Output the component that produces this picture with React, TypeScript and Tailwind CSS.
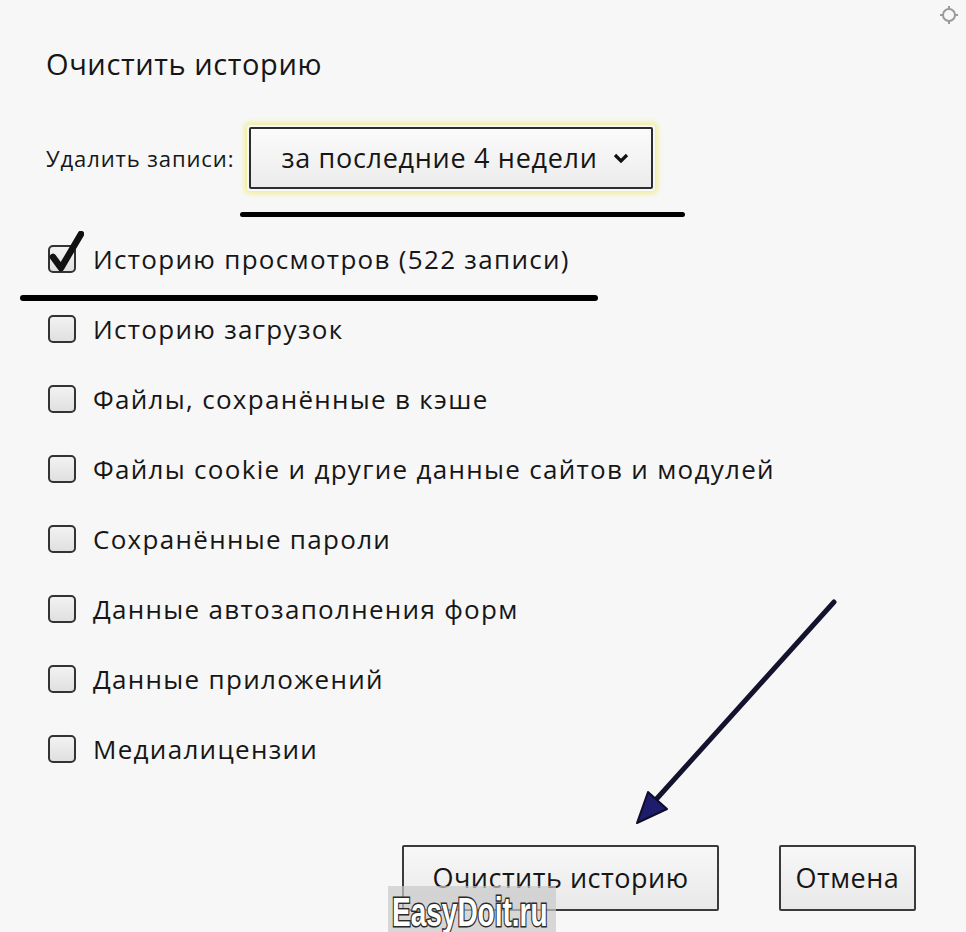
import React from 'react';

const items = [
  { label: 'Историю просмотров (522 записи)', checked: true },
  { label: 'Историю загрузок', checked: false },
  { label: 'Файлы, сохранённые в кэше', checked: false },
  { label: 'Файлы cookie и другие данные сайтов и модулей', checked: false },
  { label: 'Сохранённые пароли', checked: false },
  { label: 'Данные автозаполнения форм', checked: false },
  { label: 'Данные приложений', checked: false },
  { label: 'Медиалицензии', checked: false },
];

function CheckBox({ checked }: { checked: boolean }) {
  return (
    <div className="relative h-[28px] w-[28px] shrink-0 rounded-[5px] border-2 border-[#333] bg-gradient-to-b from-[#f2f2f2] to-[#e0e0e0]">
      {checked && (
        <svg
          className="absolute left-[-2px] top-[-16px] h-[44px] w-[36px]"
          viewBox="0 0 36 44"
        >
          <path
            d="M5 26 L13 37 L33 3"
            fill="none"
            stroke="#111"
            strokeWidth="6.5"
            strokeLinejoin="round"
            strokeLinecap="round"
          />
        </svg>
      )}
    </div>
  );
}

export default function App() {
  return (
    <div
      className="relative h-[932px] w-[966px] overflow-hidden bg-[#f7f7f7] text-[#161616]"
      style={{ fontFamily: '"Open Sans", "Noto Sans", sans-serif' }}
    >
      {/* top-right settings glyph */}
      <svg className="absolute right-[6px] top-[4px] h-[22px] w-[22px]" viewBox="0 0 22 22">
        <circle cx="11" cy="11" r="6" fill="none" stroke="#9a9a9a" strokeWidth="2" />
        <path d="M11 2v4M11 16v4M2 11h4M16 11h4" stroke="#9a9a9a" strokeWidth="2" />
      </svg>

      <div className="flex flex-col pl-[46px] pr-[50px] pt-[46px]">
        <h1 className="h-[36px] text-[29px] font-normal leading-[36px] tracking-[0.6px]">
          Очистить историю
        </h1>

        {/* range select */}
        <div className="mt-[43px] flex h-[66px] items-center gap-[13px]">
          <span className="text-[22px] tracking-[0.9px]">Удалить записи:</span>
          <div className="rounded-[3px] p-[2px] shadow-[0_0_5px_3px_#f1eea0]">
            <div className="flex h-[62px] w-[404px] items-center justify-between rounded-[2px] border-2 border-[#2d2d2d] bg-gradient-to-b from-[#fbfbfb] to-[#ececec] pl-[30px] pr-[22px]">
              <span className="text-[27px] tracking-[0.7px]">за последние 4 недели</span>
              <svg className="h-[14px] w-[16px]" viewBox="0 0 16 14">
                <path d="M2 4 L8 10 L14 4" fill="none" stroke="#111" strokeWidth="3.2" />
              </svg>
            </div>
          </div>
        </div>

        {/* options */}
        <ul className="mt-[33px] flex flex-col">
          {items.map((it) => (
            <li key={it.label} className="flex h-[70px] items-center gap-[17px] pl-[2px]">
              <CheckBox checked={it.checked} />
              <span className="text-[26px] leading-none tracking-[1.3px]">{it.label}</span>
            </li>
          ))}
        </ul>

        {/* actions */}
        <div className="mt-[61px] flex justify-end gap-[60px]">
          <button className="h-[66px] w-[317px] rounded-[2px] border-2 border-[#3a3a3a] bg-gradient-to-b from-[#f8f8f8] to-[#e8e8e8] text-[27px] tracking-[0.5px]">
            Очистить историю
          </button>
          <button className="h-[66px] w-[137px] rounded-[2px] border-2 border-[#3a3a3a] bg-gradient-to-b from-[#f8f8f8] to-[#e8e8e8] text-[27px] tracking-[0.5px]">
            Отмена
          </button>
        </div>
      </div>

      {/* annotation underlines */}
      <div className="absolute left-[240px] top-[212px] h-[5px] w-[445px] rounded-full bg-black" />
      <div className="absolute left-[20px] top-[295px] h-[6px] w-[578px] rounded-full bg-black" />

      {/* annotation arrow */}
      <svg className="pointer-events-none absolute left-0 top-0 h-[932px] w-[966px]" viewBox="0 0 966 932">
        <line x1="834" y1="602" x2="652" y2="804" stroke="#13132e" strokeWidth="5" strokeLinecap="round" />
        <polygon points="637,823 648,792 667,809" fill="#1d1d6b" stroke="#0e0e2a" strokeWidth="2" strokeLinejoin="round" />
      </svg>

      {/* watermark */}
      <div className="absolute left-[388px] top-[886px] h-[46px] w-[168px] bg-[#c9c9c9]/70" />
      <div
        className="absolute left-[392px] top-[893px] origin-left scale-x-[0.7] text-[40px] font-bold leading-[38px] text-white [-webkit-text-stroke:3px_#2a2a2a] [paint-order:stroke_fill]"
        style={{ fontFamily: '"Liberation Sans", Arial, sans-serif' }}
      >
        EasyDoit.ru
      </div>
    </div>
  );
}
